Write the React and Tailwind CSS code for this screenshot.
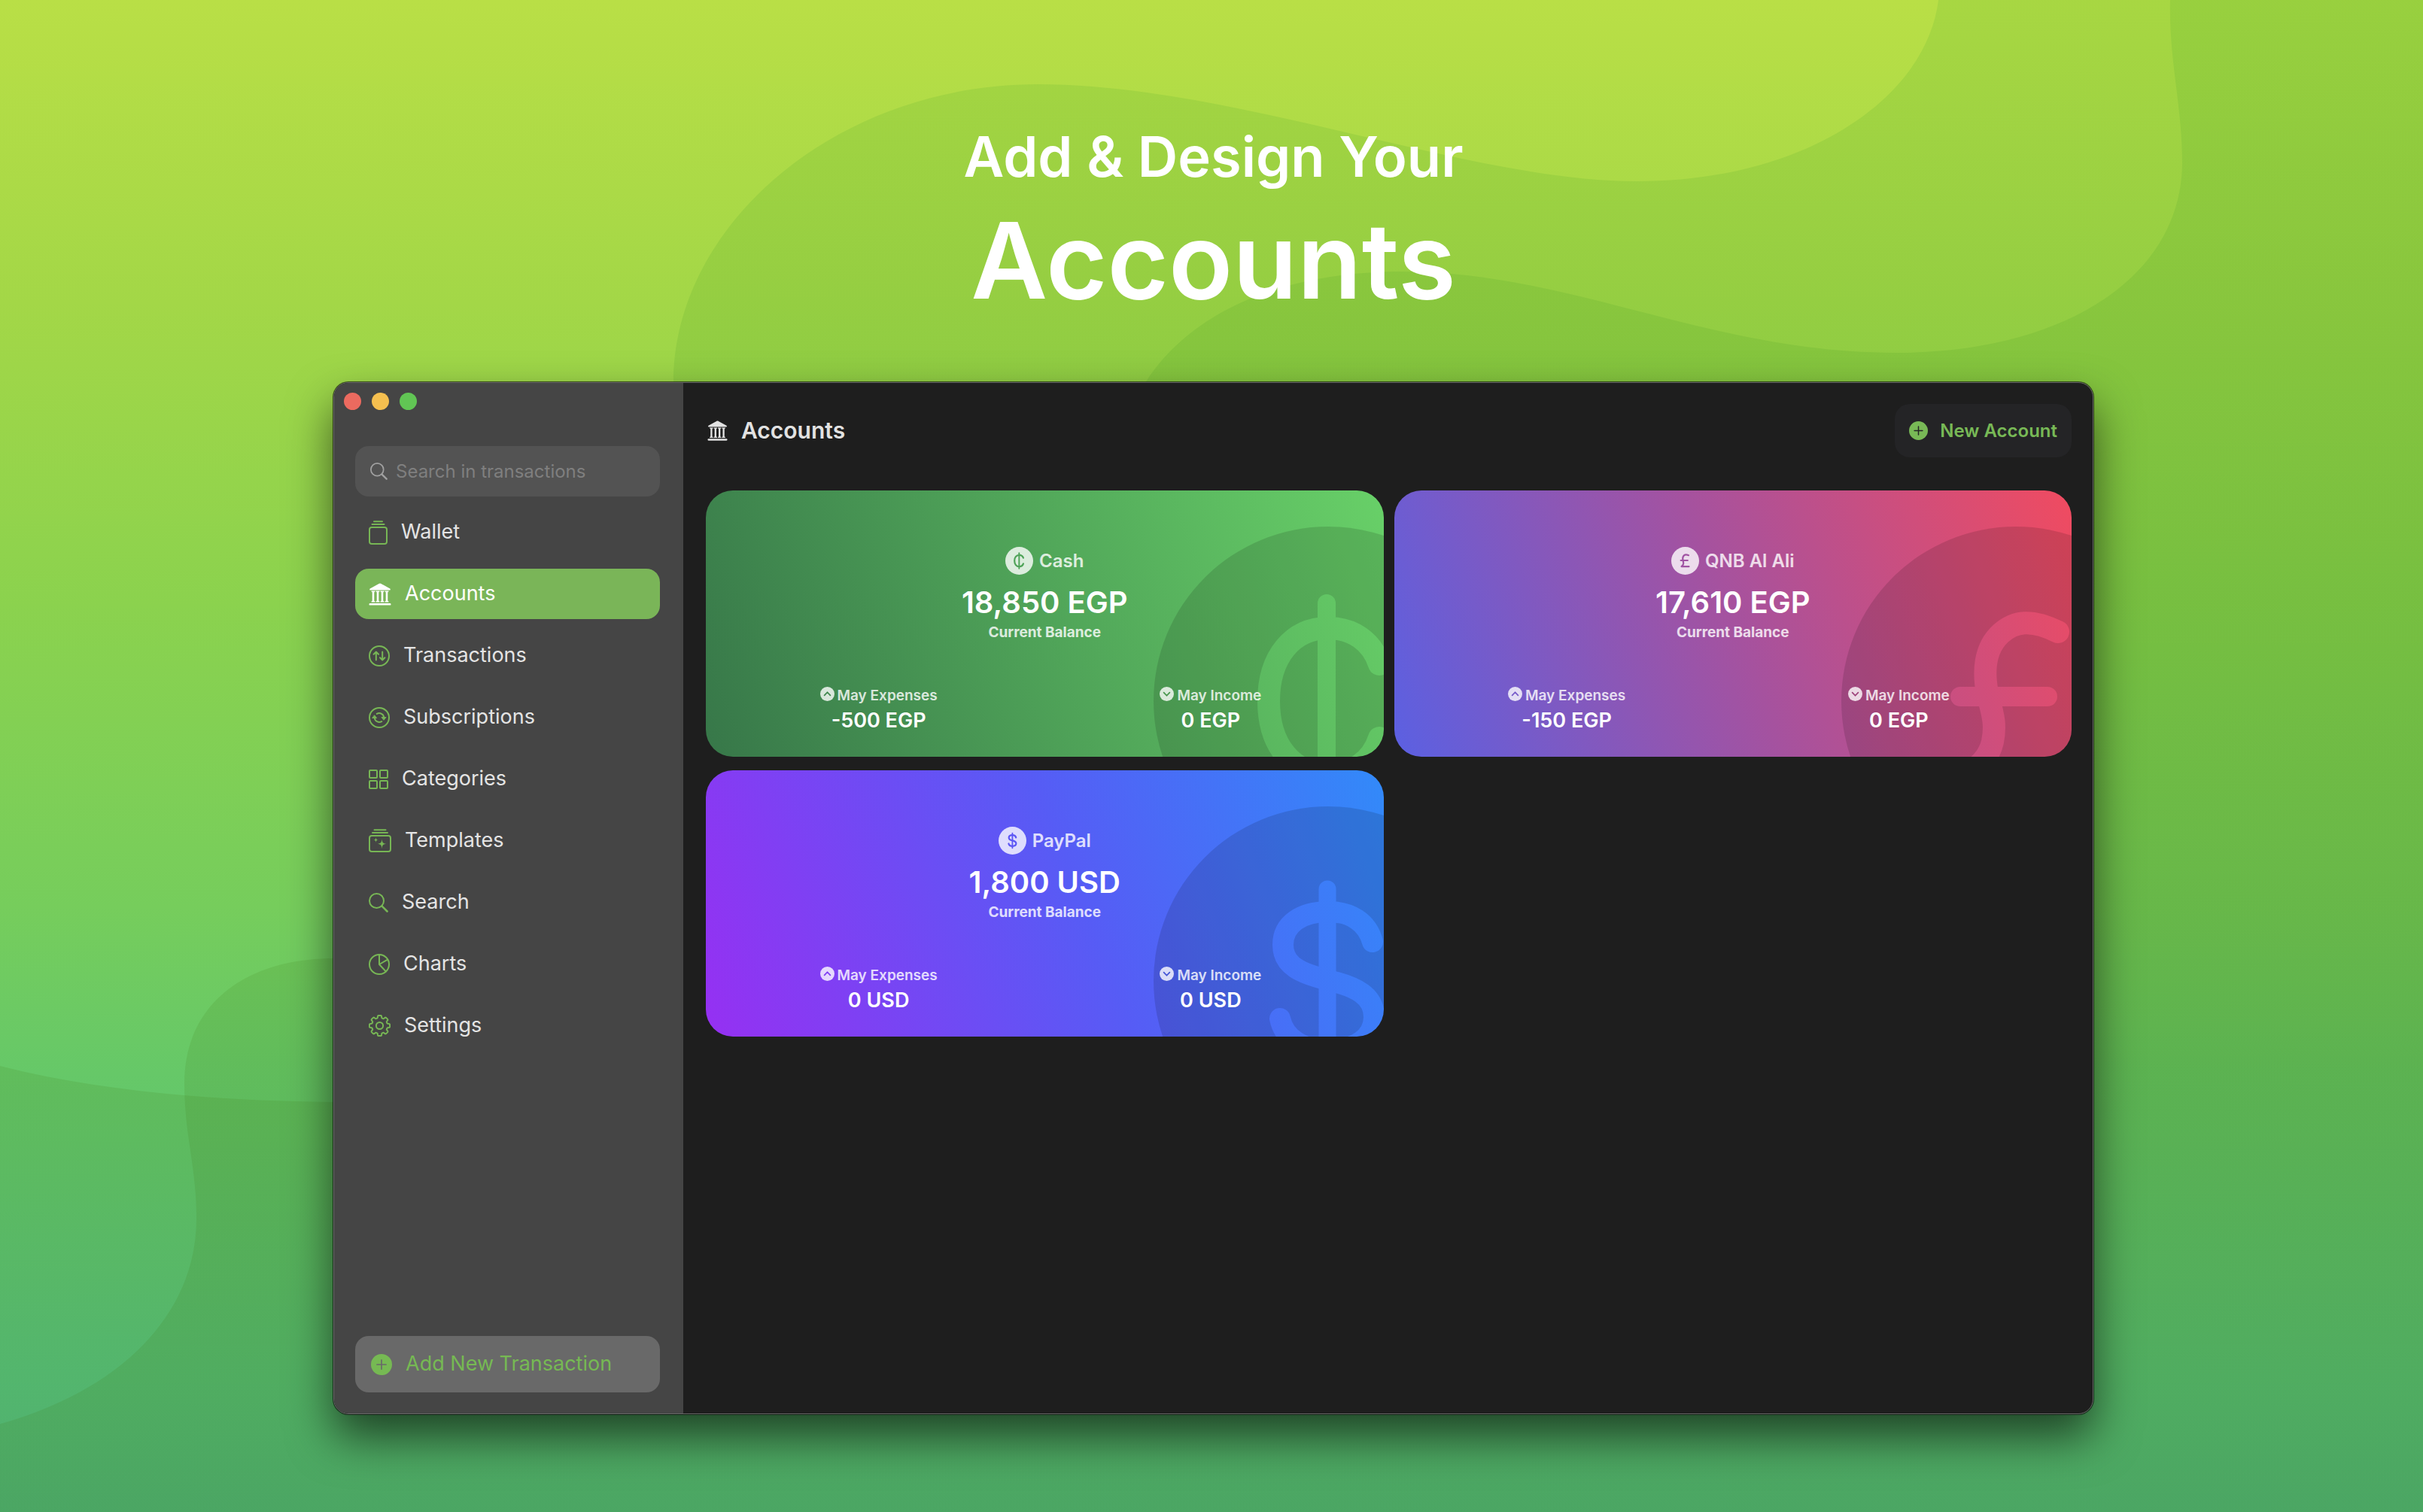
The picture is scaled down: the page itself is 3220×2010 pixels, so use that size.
import { useId } from "react";

function Backdrop() {
  return (
    <svg
      className="absolute inset-0 h-full w-full"
      viewBox="0 0 3220 2010"
      preserveAspectRatio="none"
      aria-hidden="true"
    >
      <defs>
        <linearGradient id="sky" x1="0" y1="0" x2="0" y2="1">
          <stop offset="0" stopColor="#b9df46" />
          <stop offset="0.2" stopColor="#a3d747" />
          <stop offset="0.4" stopColor="#8bd24e" />
          <stop offset="0.6" stopColor="#76cd5c" />
          <stop offset="0.71" stopColor="#66c868" />
          <stop offset="0.92" stopColor="#56c07d" />
          <stop offset="1" stopColor="#50b880" />
        </linearGradient>
        <linearGradient id="tint" gradientUnits="userSpaceOnUse" x1="0" y1="0" x2="0" y2="2010">
          <stop offset="0" stopColor="#32a028" />
          <stop offset="0.7" stopColor="#3c6e0a" />
          <stop offset="1" stopColor="#3c6e0a" />
        </linearGradient>
      </defs>
      <rect width="3220" height="2010" fill="url(#sky)" />
      <path
        fill="url(#tint)"
        fillOpacity="0.13"
        d="M2576 0C2560 130 2400 241 2175 241C1950 241 1640 112 1379 112C1110 112 895 300 895 508V1300C800 1440 640 1465 440 1465C280 1463 130 1450 0 1417V2010H3220V0Z"
      />
      <path
        fill="url(#tint)"
        fillOpacity="0.13"
        d="M2884 0C2882 80 2900 140 2900 215C2900 370 2740 469 2520 469C2270 469 2090 361 1863 361C1680 361 1570 430 1520 512L1400 1274H445C320 1274 245 1340 245 1440C245 1510 261 1550 261 1620C261 1740 170 1845 0 1893V2010H3220V0Z"
      />
    </svg>
  );
}

const line = {
  fill: "none",
  stroke: "currentColor",
  strokeWidth: 2,
  strokeLinecap: "round",
  strokeLinejoin: "round",
  "aria-hidden": true,
};

function WalletIcon() {
  return (
    <svg {...line} className="h-8 w-[25px]" viewBox="0 0 25 32">
      <rect x="1" y="9" width="23" height="22" rx="3" />
      <path d="M4.500 5H20.500M7 1.200H18" />
    </svg>
  );
}

function BankIcon({ className }) {
  return (
    <svg className={className} viewBox="0 0 30 30" fill="currentColor" aria-hidden="true">
      <path d="M15 0.500C15.500 0.500 16 0.700 16.500 1L28.300 7.400C29 7.800 29 9.500 28 9.500H2C1 9.500 1 7.800 1.700 7.400L13.500 1C14 0.700 14.500 0.500 15 0.500Z" />
      <path d="M3.500 10.500H8.500V11.600L7.300 12.200V23.800L8.500 24.400V25.500H3.500V24.400L4.700 23.800V12.200L3.500 11.600Z" />
      <path d="M9.500 10.500H14.500V11.600L13.300 12.200V23.800L14.500 24.400V25.500H9.500V24.400L10.700 23.800V12.200L9.500 11.600Z" />
      <path d="M15.500 10.500H20.500V11.600L19.300 12.200V23.800L20.500 24.400V25.500H15.500V24.400L16.700 23.800V12.200L15.500 11.600Z" />
      <path d="M21.500 10.500H26.500V11.600L25.300 12.200V23.800L26.500 24.400V25.500H21.500V24.400L22.700 23.800V12.200L21.500 11.600Z" />
      <rect x="0.500" y="27" width="29" height="2.600" rx="1.200" />
    </svg>
  );
}

function TransactionsIcon() {
  return (
    <svg {...line} className="size-7" viewBox="0 0 28 28">
      <circle cx="14" cy="14" r="13" />
      <path d="M9.800 19.500V8.700M6.600 11.800L9.800 8.500L13 11.800M18.200 8.500V19.300M15 16.200L18.200 19.500L21.400 16.200" />
    </svg>
  );
}

function SubscriptionsIcon() {
  return (
    <svg {...line} className="size-7" viewBox="0 0 28 28">
      <circle cx="14" cy="14" r="13" />
      <path d="M10.800 8.900A6.200 6.200 0 0 1 20.200 14M17.200 19.100A6.200 6.200 0 0 1 7.800 14" />
      <path fill="currentColor" strokeWidth="1" d="M17.400 13.500H23L20.200 17ZM5 14.500H10.600L7.800 11Z" />
    </svg>
  );
}

function CategoriesIcon() {
  return (
    <svg {...line} className="size-[26px]" viewBox="0 0 26 26">
      <rect x="1" y="1" width="10" height="10" rx="1" />
      <rect x="15" y="1" width="10" height="10" rx="1" />
      <rect x="1" y="15" width="10" height="10" rx="1" />
      <rect x="15" y="15" width="10" height="10" rx="1" />
    </svg>
  );
}

function TemplatesIcon() {
  return (
    <svg {...line} className="h-[31px] w-[30px]" viewBox="0 0 30 31">
      <rect x="1" y="9" width="28" height="21" rx="3" />
      <path d="M5 5H25M7.500 1.200H22.500" />
      <path
        fill="currentColor"
        stroke="none"
        d="M17.500 13.500C18 18 18.700 19 23.200 19.800C18.700 20.500 18 21.500 17.500 26C17 21.500 16.300 20.500 11.800 19.800C16.300 19 17 18 17.500 13.500ZM9.500 11.200C9.800 13.600 10.300 14.200 12.600 14.600C10.300 15 9.800 15.500 9.500 18C9.200 15.500 8.700 15 6.400 14.600C8.700 14.200 9.200 13.600 9.500 11.200Z"
      />
    </svg>
  );
}

function SearchIcon({ className }) {
  return (
    <svg {...line} className={className} viewBox="0 0 26 26">
      <circle cx="10.500" cy="10.500" r="9.500" />
      <path strokeWidth="2.600" d="M17.600 17.600L24.500 24.500" />
    </svg>
  );
}

function ChartsIcon() {
  return (
    <svg {...line} className="size-7" viewBox="0 0 28 28">
      <circle cx="14" cy="14" r="13" />
      <path d="M14 1V14L22.800 23.500M14 14L25.200 7.600" />
    </svg>
  );
}

const gearOutline = Array.from({ length: 241 }, (_, i) => {
  const a = (i / 240) * Math.PI * 2;
  const r = 12 + 1.6 * Math.tanh(3 * Math.cos(8 * a) + 0.6);
  const x = (14.5 + r * Math.sin(a)).toFixed(2);
  const y = (14.5 - r * Math.cos(a)).toFixed(2);
  return `${x},${y}`;
}).join(" ");

function SettingsIcon() {
  return (
    <svg {...line} className="size-[29px]" viewBox="0 0 29 29">
      <polygon points={gearOutline} />
      <circle cx="14.500" cy="14.500" r="4.600" />
    </svg>
  );
}

/* A filled disc with its symbol cut out, so the surface behind shows through. */
function Disc({ className, children, width = 30 }) {
  const id = useId();
  return (
    <svg className={className} viewBox="-232 -232 464 464" aria-hidden="true">
      <mask id={id} maskUnits="userSpaceOnUse" x="-232" y="-232" width="464" height="464">
        <rect x="-232" y="-232" width="464" height="464" fill="white" />
        <g fill="none" stroke="black" strokeWidth={width} strokeLinecap="round" strokeLinejoin="round">
          {children}
        </g>
      </mask>
      <circle r="232" fill="currentColor" mask={`url(#${id})`} />
    </svg>
  );
}

const symbols = {
  cent: (
    <>
      <path strokeWidth="24" d="M-2 -130V130" />
      <path d="M68 -49C58 -80 32 -97 0 -97C-48 -97 -79 -58 -79 0C-79 58 -48 97 0 97C32 97 58 80 68 49" />
    </>
  ),
  pound: (
    <>
      <path d="M56 -92C20 -110 -2 -106 -20 -90C-42 -70 -44 -38 -37 -6C-29 22 -27 34 -31 54C-36 76 -50 86 -62 96H62" />
      <path strokeWidth="26" d="M-74 -6H42" />
    </>
  ),
  dollar: (
    <>
      <path strokeWidth="23" d="M-1 -122V122" />
      <path
        strokeWidth="28"
        d="M59 -52C52 -78 30 -92 0 -92C-35 -92 -60 -76 -60 -48C-60 -20 -36 -10 0 -1C38 8 61 20 61 48C61 76 35 92 0 92C-32 92 -58 78 -64 50"
      />
    </>
  ),
};

function PlusDisc({ className }) {
  return (
    <Disc className={className} width={28}>
      <path d="M-100 0H100M0 -100V100" />
    </Disc>
  );
}

const menu = [
  { label: "Wallet", icon: <WalletIcon /> },
  { label: "Accounts", icon: <BankIcon className="size-[30px]" />, active: true },
  { label: "Transactions", icon: <TransactionsIcon /> },
  { label: "Subscriptions", icon: <SubscriptionsIcon /> },
  { label: "Categories", icon: <CategoriesIcon /> },
  { label: "Templates", icon: <TemplatesIcon /> },
  { label: "Search", icon: <SearchIcon className="size-[26px]" /> },
  { label: "Charts", icon: <ChartsIcon /> },
  { label: "Settings", icon: <SettingsIcon /> },
];

function Sidebar() {
  return (
    <aside className="flex w-[464px] shrink-0 flex-col bg-[#454545] pt-[13px] pb-7">
      <div className="flex gap-[14px] px-[13px]">
        <button aria-label="Close" className="size-[23px] rounded-full bg-[#ec6a5f]" />
        <button aria-label="Minimize" className="size-[23px] rounded-full bg-[#f5bf4f]" />
        <button aria-label="Zoom" className="size-[23px] rounded-full bg-[#61c554]" />
      </div>
      <div className="mt-12 flex flex-1 flex-col pr-[31px] pl-7">
        <label className="flex h-[67px] items-center gap-[11px] rounded-[18px] bg-[#535353] px-5 text-[#a0a0a0]">
          <SearchIcon className="size-[23px] shrink-0" />
          <input
            type="search"
            aria-label="Search in transactions"
            placeholder="Search in transactions"
            className="w-full min-w-0 bg-transparent text-[24px] text-[#e6e6e6] outline-none placeholder:text-[#7f7f7f]"
          />
        </label>
        <nav className="mt-[14px] flex flex-col gap-[15px]">
          {menu.map((item) => (
            <a
              key={item.label}
              href="#"
              aria-current={item.active ? "page" : undefined}
              className={
                item.active
                  ? "flex h-[67px] items-center gap-[18px] rounded-[18px] bg-[#7ab558] px-[18px] text-[27px] text-white"
                  : "flex h-[67px] items-center gap-[18px] rounded-[18px] px-[18px] text-[27px] text-[#77b655]"
              }
            >
              {item.icon}
              <span className={item.active ? "text-white" : "text-[#e4e4e4]"}>{item.label}</span>
            </a>
          ))}
        </nav>
        <button className="mt-auto flex h-[75px] items-center gap-[18px] rounded-[18px] bg-[#696969] px-[21px] text-[27px] text-[#76b953]">
          <PlusDisc className="size-7" />
          Add New Transaction
        </button>
      </div>
    </aside>
  );
}

const accounts = [
  {
    name: "Cash",
    symbol: "cent",
    balance: "18,850 EGP",
    expenses: "-500 EGP",
    income: "0 EGP",
    surface: "bg-[linear-gradient(69deg,#377749,#68d068)]",
  },
  {
    name: "QNB Al Ali",
    symbol: "pound",
    balance: "17,610 EGP",
    expenses: "-150 EGP",
    income: "0 EGP",
    surface: "bg-[linear-gradient(69deg,#5b60e2,#a5529f_50%,#f04b60)]",
  },
  {
    name: "PayPal",
    symbol: "dollar",
    balance: "1,800 USD",
    expenses: "0 USD",
    income: "0 USD",
    surface: "bg-[linear-gradient(69deg,#9630f2,#565cf5_55%,#328af9)]",
  },
];

function Stat({ label, value, chevron }) {
  return (
    <div className="flex flex-col items-center gap-[5px]">
      <dt className="flex items-start gap-1 text-[19px] leading-6 font-semibold text-white/80">
        <Disc className="size-[19px]" width={44}>
          <path d={chevron} />
        </Disc>
        {label}
      </dt>
      <dd className="text-[27px] leading-8 font-semibold text-white">{value}</dd>
    </div>
  );
}

function AccountCard({ account }) {
  return (
    <article className={`relative overflow-hidden rounded-[36px] pt-[75px] pb-8 ${account.surface}`}>
      <Disc className="absolute top-12 -right-[158px] size-[464px] text-black/[0.13]">
        {symbols[account.symbol]}
      </Disc>
      <div className="relative flex flex-col items-center">
        <h2 className="flex items-center gap-2 text-[24px] leading-[37px] font-semibold text-white/80">
          <Disc className="size-[37px]" width={28}>
            {symbols[account.symbol]}
          </Disc>
          {account.name}
        </h2>
        <p className="mt-[15px] text-[40px] leading-[44px] font-semibold text-white">{account.balance}</p>
        <p className="mt-[6px] text-[19px] leading-6 font-bold text-white/80">Current Balance</p>
        <dl className="mt-[60px] grid w-full grid-cols-2 px-[9px]">
          <Stat label="May Expenses" value={account.expenses} chevron="M-95 45L0 -55L95 45" />
          <Stat label="May Income" value={account.income} chevron="M-95 -45L0 55L95 -45" />
        </dl>
      </div>
    </article>
  );
}

export default function App() {
  return (
    <div className="relative isolate flex min-h-screen flex-col overflow-hidden font-['Inter',sans-serif]">
      <Backdrop />
      <header className="relative pt-[158px] pr-[438px] pl-[443px] text-center font-semibold text-white">
        <h1>
          <span className="block text-[74px] leading-[100px]">Add &amp; Design Your</span>
          <span className="mt-3 block text-[140px] leading-[152px]">Accounts</span>
        </h1>
      </header>
      <div className="relative flex flex-1 pt-[86px] pr-[438px] pb-[130px] pl-[443px]">
        <div className="flex min-w-0 flex-1 overflow-hidden rounded-[20px] border border-[#686868] bg-[#1e1e1e] shadow-[0_0_0_1px_rgba(0,0,0,0.6),0_30px_60px_rgba(0,0,0,0.6)]">
          <Sidebar />
          <main className="min-w-0 flex-1 pt-7 pr-7 pb-7 pl-[30px]">
            <div className="flex h-[71px] items-center justify-between">
              <h2 className="flex items-center gap-[18px] pl-[2px] text-[30px] font-semibold text-[#e2e2e2]">
                <BankIcon className="size-[27px]" />
                Accounts
              </h2>
              <button className="flex h-full items-center gap-4 rounded-[20px] bg-[#242426] px-[19px] text-[24px] font-semibold text-[#78b956]">
                <PlusDisc className="size-[25px]" />
                New Account
              </button>
            </div>
            <div className="mt-11 grid grid-cols-2 gap-x-[14px] gap-y-[18px]">
              {accounts.map((account) => (
                <AccountCard key={account.name} account={account} />
              ))}
            </div>
          </main>
        </div>
      </div>
    </div>
  );
}
